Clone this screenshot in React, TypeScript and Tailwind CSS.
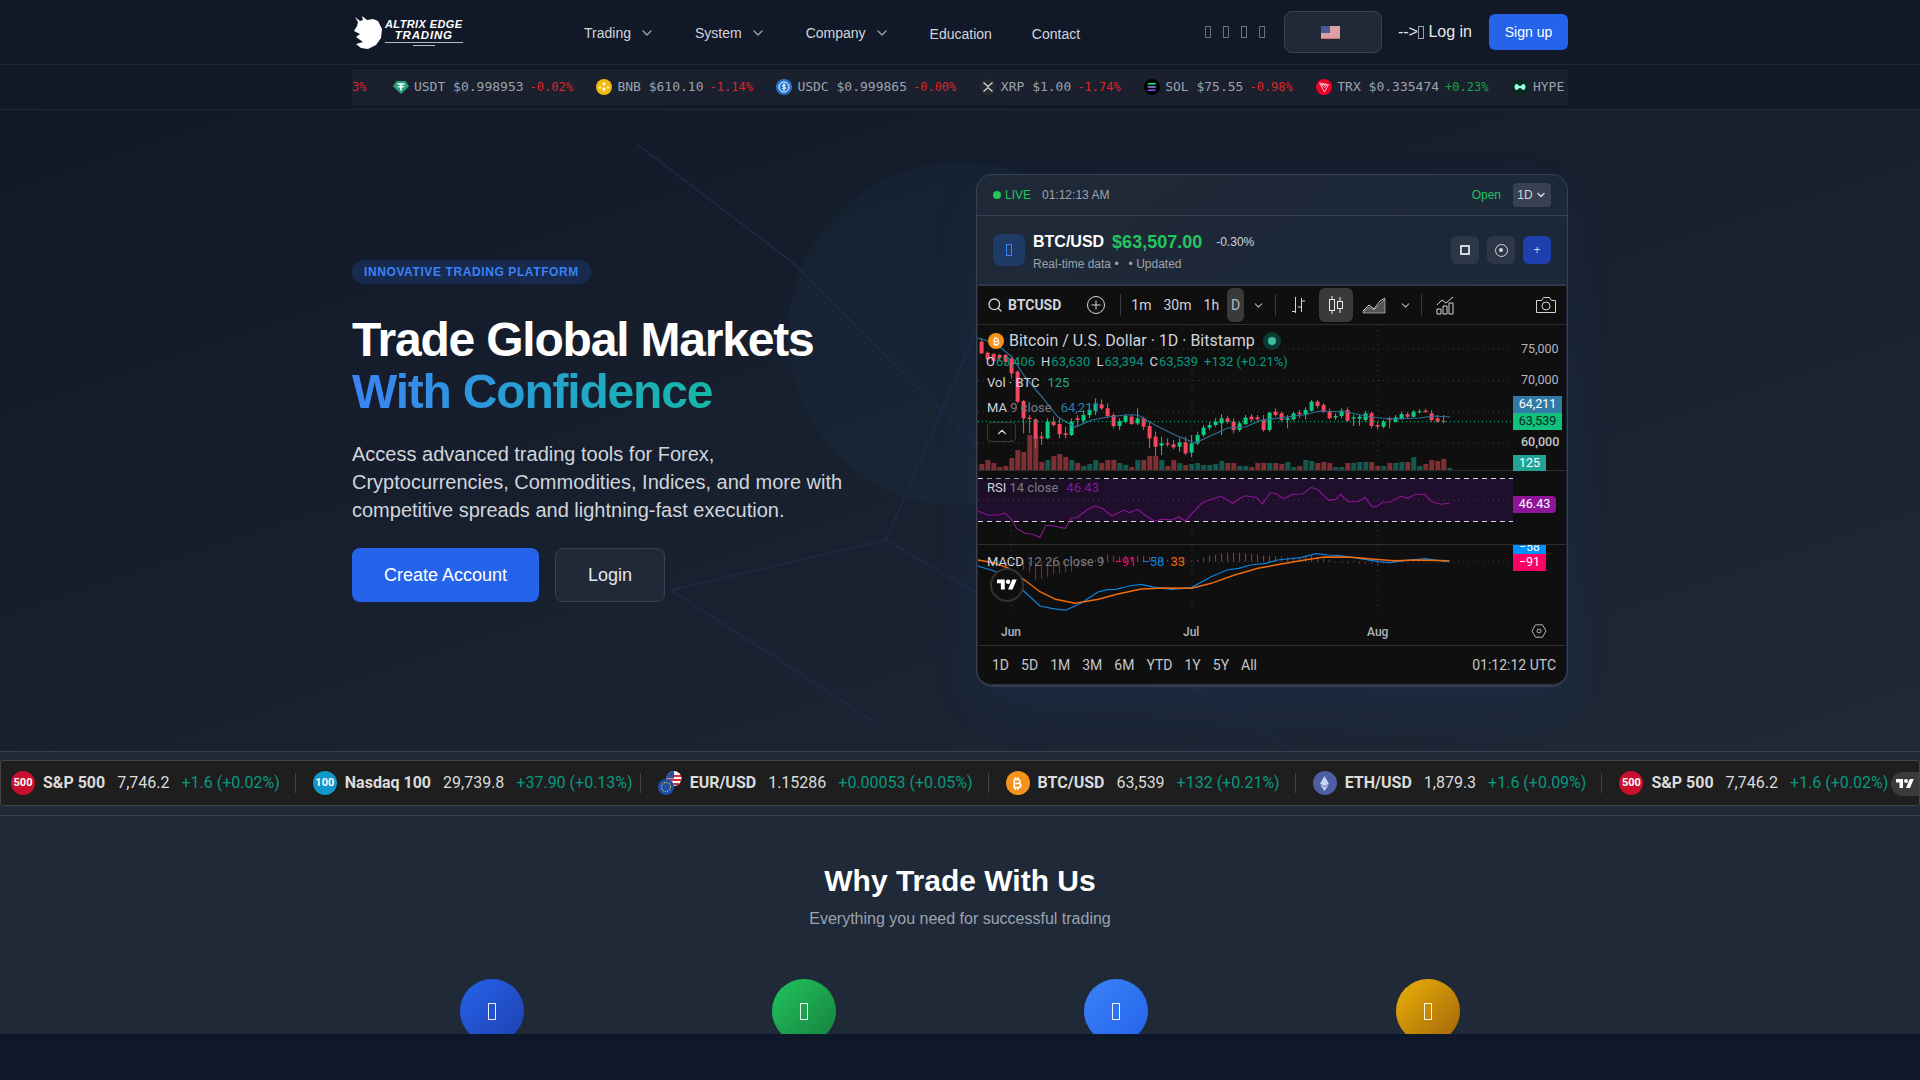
import { ChevronDown, ChevronUp, Search } from 'lucide-react'
import { FaBitcoinSign, FaEthereum } from 'react-icons/fa6'

// y values below were read off the reference, in 3x units from y=170
const cy = (v: number) => 170 + v / 3

// top, bottom, wick top, wick bottom, 1 = up
const CANDLES: number[][] = [
  [515, 550, 505, 552, 0], [548, 568, 545, 570, 0], [552, 572, 550, 575, 0], [555, 565, 552, 570, 0],
  [555, 575, 552, 585, 0], [565, 610, 560, 625, 0], [605, 695, 600, 700, 0], [693, 745, 690, 790, 0],
  [743, 747, 735, 790, 0], [748, 805, 745, 835, 0], [800, 805, 785, 825, 0], [755, 805, 745, 808, 1],
  [755, 765, 740, 770, 0], [762, 792, 745, 805, 0], [790, 795, 770, 805, 0], [755, 795, 745, 798, 1],
  [745, 750, 735, 770, 0], [735, 752, 720, 760, 1], [720, 735, 700, 745, 1], [700, 722, 685, 735, 1],
  [703, 715, 688, 720, 0], [715, 738, 700, 745, 0], [735, 768, 730, 775, 0], [753, 768, 745, 780, 1],
  [738, 755, 732, 760, 1], [740, 762, 732, 765, 0], [745, 760, 715, 765, 1], [745, 770, 740, 780, 0],
  [768, 805, 755, 835, 0], [800, 830, 785, 858, 0], [820, 827, 800, 855, 1], [820, 824, 805, 830, 0],
  [823, 832, 810, 838, 0], [817, 830, 805, 845, 1], [817, 850, 800, 855, 0], [820, 848, 795, 862, 1],
  [795, 820, 785, 825, 1], [773, 795, 765, 800, 1], [765, 773, 755, 780, 1], [755, 765, 745, 770, 1],
  [745, 760, 732, 795, 1], [745, 755, 738, 760, 0], [755, 780, 745, 790, 0], [760, 780, 755, 785, 1],
  [743, 762, 735, 765, 1], [740, 748, 732, 755, 0], [742, 748, 735, 755, 0], [750, 780, 735, 785, 0],
  [728, 780, 725, 785, 1], [725, 735, 715, 740, 0], [730, 750, 725, 755, 0], [745, 750, 735, 775, 1],
  [730, 748, 725, 752, 1], [728, 733, 720, 745, 0], [720, 735, 712, 748, 1], [695, 722, 690, 725, 1],
  [695, 708, 690, 715, 0], [705, 725, 700, 730, 0], [725, 745, 715, 748, 0], [738, 742, 730, 750, 1],
  [722, 738, 715, 745, 1], [720, 752, 712, 755, 0], [742, 746, 735, 768, 1], [740, 746, 735, 768, 1],
  [730, 750, 722, 755, 1], [730, 768, 725, 775, 0], [765, 770, 755, 778, 0], [755, 770, 750, 775, 1],
  [745, 750, 740, 775, 0], [742, 755, 735, 758, 1], [732, 747, 725, 750, 1], [733, 740, 727, 745, 0],
  [725, 740, 720, 742, 1], [724, 727, 718, 730, 1], [722, 726, 716, 728, 0], [730, 750, 720, 755, 0],
  [745, 755, 735, 758, 0], [752, 755, 735, 760, 0],
]

const VOLUME = [
  6, 10, 7, 3, 4, 12, 20, 18, 35, 33, 8, 10, 14, 16, 13, 10, 7, 4, 6, 10, 7, 10, 10, 7, 5, 3, 10, 10, 14, 14, 10, 4,
  10, 7, 5, 6, 7, 5, 5, 6, 9, 7, 7, 4, 4, 3, 7, 7, 7, 7, 6, 8, 3, 4, 10, 9, 7, 8, 7, 3, 3, 7, 7, 8, 8, 8, 4, 4, 7, 7,
  8, 8, 13, 4, 6, 10, 9, 11, 2,
]

const MACD_HIST = [
  0, 1, 1, 1, 2, 4, 6, 8, 11, 18, 17, 15, 13, 12, 11, 10, 6, 4, 2, -2, -5, -7, -6, -5, -6, -5, -6, -6, -5, -4, -3, -2,
  -2, -3, -1, -1, -2, -4, -6, -7, -8, -9, -9, -9, -8, -8, -7, -6, -6, -5, -5, -4, -4, -4, -5, -6, -5, -3, -2, 1, 1, 2,
  1, 2, 2, 2, 3, 2, 2, 1, 1, 1, 1, 1, 1, 1, 1, 1,
]

const MA_LINE =
  '978,338 995,343 1012,357 1025,377 1042,397 1058,417 1075,427 1092,420 1108,417 1125,415 1138,415 1155,425 1175,435 1195,443 1208,437 1228,428 1245,427 1262,420 1303,415 1320,411 1347,412 1370,417 1393,419 1420,418 1433,416 1450,417'

// these three are in 2.57x / 3x units from (970,440)
const RSI_LINE = [
  [20, 213], [45, 225], [70, 225], [90, 220], [105, 235], [120, 265], [140, 280], [160, 283], [180, 292], [195, 256],
  [215, 258], [245, 265], [260, 235], [275, 233], [300, 210], [320, 198], [340, 205], [365, 228], [395, 210], [410, 218],
  [430, 208], [455, 230], [475, 243], [495, 238], [520, 240], [535, 230], [553, 243], [575, 215], [595, 190], [615, 180],
  [645, 169], [675, 190], [705, 167], [735, 172], [752, 192], [770, 159], [785, 160], [805, 176], [830, 163], [855, 162],
  [877, 142], [895, 150], [922, 181], [940, 178], [952, 163], [972, 186], [1000, 184], [1015, 172], [1033, 200], [1045, 200],
  [1060, 187], [1080, 186], [1107, 169], [1125, 175], [1145, 163], [1168, 163], [1187, 185], [1210, 193], [1232, 190],
]
const MACD_BLUE = [
  [20, 378], [60, 392], [100, 410], [140, 455], [180, 498], [210, 505], [245, 511], [285, 490], [330, 455], [355, 449],
  [375, 448], [410, 438], [440, 433], [475, 442], [520, 448], [570, 442], [620, 410], [660, 390], [690, 385], [720, 375],
  [760, 370], [790, 360], [850, 353], [890, 341], [920, 345], [950, 347], [1000, 355], [1050, 365], [1080, 368], [1120, 361],
  [1170, 356], [1232, 366],
]
const MACD_ORANGE = [
  [20, 360], [60, 368], [100, 385], [140, 420], [180, 455], [220, 478], [270, 490], [330, 478], [380, 462], [440, 447],
  [500, 444], [570, 445], [620, 430], [680, 405], [740, 385], [800, 372], [860, 360], [910, 351], [980, 352], [1040, 358],
  [1090, 362], [1150, 360], [1232, 362],
]
const toPts = (l: number[][]) => l.map(([x, y]) => `${(970 + x / 2.57).toFixed(1)},${(440 + y / 3).toFixed(1)}`).join(' ')

const NAV = [
  { label: 'Trading', menu: true },
  { label: 'System', menu: true },
  { label: 'Company', menu: true },
  { label: 'Education', menu: false },
  { label: 'Contact', menu: false },
]

// the icon font never loaded in the reference: every icon shows as a thin empty box
function MissingGlyph({ className }: { className: string }) {
  return <span className={`inline-block border ${className}`} />
}

function CoinUsdt() {
  return (
    <svg viewBox="0 0 16 16" className="w-4 h-4 shrink-0">
      <path d="M3.500 2h9L16 7.500 8 15 0 7.500z" fill="#26a17b" />
      <path d="M4.500 4.200h7v1.600H8.800v1.100c1.600.1 2.800.4 2.800.8s-1.200.7-2.800.8v3H7.200v-3c-1.600-.1-2.800-.4-2.800-.8s1.200-.7 2.800-.8V5.800H4.500z" fill="#fff" />
    </svg>
  )
}
function CoinBnb() {
  return (
    <svg viewBox="0 0 16 16" className="w-4 h-4 shrink-0">
      <circle cx="8" cy="8" r="8" fill="#f0b90b" />
      <path d="M8 3l2 2-2 2-2-2zM4 7l1.500 1.500L4 10 2.500 8.500zM12 7l1.500 1.500L12 10l-1.500-1.500zM8 8l2 2-2 3-2-3z" fill="#fff3c4" />
    </svg>
  )
}
function CoinUsdc() {
  return (
    <svg viewBox="0 0 16 16" className="w-4 h-4 shrink-0">
      <circle cx="8" cy="8" r="8" fill="#2775ca" />
      <circle cx="8" cy="8" r="5" fill="none" stroke="#fff" strokeWidth="1" />
      <path d="M8 4.500v7M9.800 6.300C9.300 5.700 6.400 5.500 6.400 6.800 6.400 8.300 9.800 7.700 9.800 9.200 9.800 10.500 6.900 10.300 6.200 9.600" fill="none" stroke="#fff" strokeWidth="1" />
    </svg>
  )
}
function CoinXrp() {
  return (
    <svg viewBox="0 0 16 16" className="w-4 h-4 shrink-0">
      <circle cx="8" cy="8" r="8" fill="#23292f" />
      <path d="M3.500 3.500L8 7.500l4.500-4M3.500 12.500L8 8.500l4.500 4" fill="none" stroke="#d6d9dc" strokeWidth="1.300" />
    </svg>
  )
}
function CoinSol() {
  return (
    <svg viewBox="0 0 16 16" className="w-4 h-4 shrink-0">
      <circle cx="8" cy="8" r="8" fill="#000" />
      <path d="M4.500 4h8l-1.500 1.600H3z" fill="#14f195" />
      <path d="M3 7.200h8l1.500 1.600h-8z" fill="#80a0e0" />
      <path d="M4.500 10.400h8l-1.500 1.600H3z" fill="#9945ff" />
    </svg>
  )
}
function CoinTrx() {
  return (
    <svg viewBox="0 0 16 16" className="w-4 h-4 shrink-0">
      <circle cx="8" cy="8" r="8" fill="#ef0027" />
      <path d="M3.500 4l9 1.800L8.500 13z M5 5.200l3 3.200 2.800-2.200z" fill="none" stroke="#ffd5da" strokeWidth="0.900" />
    </svg>
  )
}
function CoinHype() {
  return (
    <svg viewBox="0 0 16 16" className="w-4 h-4 shrink-0">
      <circle cx="8" cy="8" r="8" fill="#07291f" />
      <path d="M2.500 8c0-3 2.500-4 3.700-2 .9 1.300 2.700 1.300 3.600 0 1.200-2 3.700-1 3.700 2s-2.500 4-3.700 2c-.9-1.300-2.700-1.300-3.600 0C5 12 2.500 11 2.500 8z" fill="#97fce4" />
    </svg>
  )
}

const CRYPTO = [
  { icon: <CoinUsdt />, sym: 'USDT', price: '$0.998953', chg: '-0.02%' },
  { icon: <CoinBnb />, sym: 'BNB', price: '$610.10', chg: '-1.14%' },
  { icon: <CoinUsdc />, sym: 'USDC', price: '$0.999865', chg: '-0.00%' },
  { icon: <CoinXrp />, sym: 'XRP', price: '$1.00', chg: '-1.74%' },
  { icon: <CoinSol />, sym: 'SOL', price: '$75.55', chg: '-0.98%' },
  { icon: <CoinTrx />, sym: 'TRX', price: '$0.335474', chg: '+0.23%' },
]

function TvMark({ className }: { className: string }) {
  return (
    <svg viewBox="0 0 36 28" className={className} fill="currentColor">
      <path d="M14 22H7V11H0V4h14v18zM28 22h-8l7.500-18h8L28 22z" />
      <circle cx="20" cy="8" r="4" />
    </svg>
  )
}

function EurUsdMark() {
  return (
    <svg viewBox="0 0 24 24" className="w-6 h-6 shrink-0">
      <circle cx="16" cy="7.500" r="7.500" fill="#f4f4f4" />
      <path d="M9 5h14M9.500 9h13.500M11 13h10" stroke="#d6303e" strokeWidth="2" />
      <path d="M16 0a7.500 7.500 0 0 0-7.500 7.500H16z" fill="#2b4aa0" />
      <circle cx="8" cy="16" r="8" fill="#1f4fa8" />
      <circle cx="8" cy="16" r="4.500" fill="none" stroke="#f7d117" strokeWidth="1.200" strokeDasharray="1 1.360" />
    </svg>
  )
}

const TV_ROWS = [
  { logo: <span className="w-6 h-6 rounded-full bg-[#c8102e] text-white text-[11px] font-bold flex items-center justify-center">500</span>, name: 'S&P 500', price: '7,746.2', chg: '+1.6 (+0.02%)', pad: 'w-[15px]' },
  { logo: <span className="w-6 h-6 rounded-full bg-[#0f98c9] text-white text-[11px] font-bold flex items-center justify-center">100</span>, name: 'Nasdaq 100', price: '29,739.8', chg: '+37.90 (+0.13%)', pad: 'w-[7px]' },
  { logo: <EurUsdMark />, name: 'EUR/USD', price: '1.15286', chg: '+0.00053 (+0.05%)', pad: 'w-[15px]' },
  { logo: <span className="w-6 h-6 rounded-full bg-[#f7931a] text-white text-[13px] flex items-center justify-center"><FaBitcoinSign /></span>, name: 'BTC/USD', price: '63,539', chg: '+132 (+0.21%)', pad: 'w-[15px]' },
  { logo: <span className="w-6 h-6 rounded-full bg-[#4c5fa5] text-[#c7d6f5] text-[15px] flex items-center justify-center"><FaEthereum /></span>, name: 'ETH/USD', price: '1,879.3', chg: '+1.6 (+0.09%)', pad: 'w-[15px]' },
  { logo: <span className="w-6 h-6 rounded-full bg-[#c8102e] text-white text-[11px] font-bold flex items-center justify-center">500</span>, name: 'S&P 500', price: '7,746.2', chg: '+1.6 (+0.02%)', pad: 'w-[15px]' },
]

const FEATURES = [
  'bg-gradient-to-br from-[#2563eb] to-[#1e40af]',
  'bg-gradient-to-br from-[#22c55e] to-[#15803d]',
  'bg-gradient-to-br from-[#3b82f6] to-[#2563eb]',
  'bg-gradient-to-br from-[#eab308] to-[#a16207]',
]

function ChartSvg() {
  const green = '#0ecb81'
  const red = '#f6465d'
  return (
    <svg viewBox="978 325 588 320" className="block w-[588px] h-[320px]">
      {[349, 380.500, 412, 443].map(y => (
        <line key={y} x1="978" x2="1512" y1={y} y2={y} stroke="#3a3a3a" strokeDasharray="1 4" />
      ))}
      {[1011, 1192, 1378].map(x => (
        <line key={x} x1={x} x2={x} y1="325" y2="614" stroke="#3a3a3a" strokeDasharray="1 4" />
      ))}
      {VOLUME.map((h, i) => {
        const up = CANDLES[i] ? CANDLES[i][4] === 1 : true
        return <rect key={i} x={979.300 + i * 6} y={470 - h} width="5" height={h} fill={up ? '#125a50' : '#7d2f33'} />
      })}
      {CANDLES.map((c, i) => {
        const x = 981.600 + i * 6
        const color = c[4] ? green : red
        return (
          <g key={i}>
            <line x1={x} x2={x} y1={cy(c[2])} y2={cy(c[3])} stroke={color} strokeWidth="1" />
            <rect x={x - 2} y={cy(c[0])} width="4" height={Math.max(1, (c[1] - c[0]) / 3)} fill={color} />
          </g>
        )
      })}
      <polyline points={MA_LINE} fill="none" stroke="#2f6f99" strokeWidth="1.200" />
      <line x1="978" x2="1513" y1="421.700" y2="421.700" stroke="#0ecb81" strokeDasharray="1 3" />

      <line x1="978" x2="1566" y1="470.500" y2="470.500" stroke="#2e2e2e" />
      <rect x="978" y="478.500" width="535" height="43" fill="#1f0f2d" />
      <line x1="978" x2="1513" y1="478.500" y2="478.500" stroke="#d8d2dc" strokeDasharray="5 4" />
      <line x1="978" x2="1513" y1="521.500" y2="521.500" stroke="#d8d2dc" strokeDasharray="5 4" />
      <line x1="978" x2="1513" y1="500" y2="500" stroke="#4a3a55" strokeDasharray="1 4" />
      <polyline points={toPts(RSI_LINE)} fill="none" stroke="#8e1599" strokeWidth="1.100" />

      <line x1="978" x2="1566" y1="544.500" y2="544.500" stroke="#2e2e2e" />
      <line x1="978" x2="1513" y1="561.700" y2="561.700" stroke="#3a3a3a" strokeDasharray="1 4" />
      {MACD_HIST.map((h, i) => (
        <line key={i} x1={981.600 + i * 6} x2={981.600 + i * 6} y1="561.700" y2={561.700 + h} stroke={h > 0 ? '#a8174f' : '#ff0066'} />
      ))}
      <polyline points={toPts(MACD_BLUE)} fill="none" stroke="#0a84e0" strokeWidth="1.200" />
      <polyline points={toPts(MACD_ORANGE)} fill="none" stroke="#f26c0d" strokeWidth="1.400" />
    </svg>
  )
}

function Widget() {
  return (
    <div className="mx-px rounded-b-[14px] overflow-hidden bg-[#0f0f0f] border-t-2 border-b-2 border-[#30394a] font-['Roboto',sans-serif] text-[#d1d4dc]">
      {/* toolbar */}
      <div className="h-[39px] border-b border-[#2e2e2e] flex items-center text-[14px] text-[#d1d4dc]">
        <Search size={16} className="ml-[9px] text-[#d1d4dc]" strokeWidth={2} />
        <span className="ml-[5px] font-bold text-[14px]">BTCUSD</span>
        <svg viewBox="0 0 20 20" className="ml-[25px] w-5 h-5" fill="none" stroke="#d1d4dc">
          <circle cx="10" cy="10" r="8.500" />
          <path d="M10 5.500v9M5.500 10h9" />
        </svg>
        <span className="ml-[14px] w-px h-[22px] bg-[#3a3a3a]" />
        <span className="ml-[10px]">1m</span>
        <span className="ml-[12px]">30m</span>
        <span className="ml-[12px]">1h</span>
        <span className="ml-[8px] w-[17px] h-[34px] rounded-md bg-[#3a3a3a] text-[#b2b5be] flex items-center justify-center">D</span>
        <ChevronDown size={13} className="ml-[8px] text-[#b2b5be]" />
        <span className="ml-[10px] w-px h-[22px] bg-[#3a3a3a]" />
        <svg viewBox="0 0 18 18" className="ml-[13px] w-[18px] h-[18px]" fill="none" stroke="#d1d4dc">
          <path d="M6.500 1v16M6.500 15.500H3M12.500 2v14M12.500 5h3.500M12.500 11H9" />
        </svg>
        <span className="ml-[12px] w-[34px] h-[34px] rounded-md bg-[#3a3a3a] flex items-center justify-center">
          <svg viewBox="0 0 18 20" className="w-[18px] h-5" fill="none" stroke="#e8e8e8">
            <path d="M5 1v3M5 16v3M13 2v4M13 14v4" />
            <rect x="2.500" y="4.500" width="5" height="11" />
            <rect x="10.500" y="6.500" width="5" height="7" />
          </svg>
        </span>
        <svg viewBox="0 0 24 18" className="ml-[9px] w-[24px] h-[18px]" fill="none" stroke="#d1d4dc">
          <path d="M1 15l6-6 5 4 6-8 5-3" />
          <path d="M1 17h22V3l-5 5-6 6-5-3-6 5z" fill="#d1d4dc" fillOpacity="0.350" strokeWidth="0.600" />
        </svg>
        <ChevronDown size={13} className="ml-[13px] text-[#b2b5be]" />
        <span className="ml-[9px] w-px h-[22px] bg-[#3a3a3a]" />
        <svg viewBox="0 0 20 20" className="ml-[13px] w-5 h-5" fill="none" stroke="#d1d4dc">
          <path d="M2 10l5-5 4 3 7-6" />
          <path d="M2 14h4v5H2zM8 11h4v8H8zM14 8h4v11h-4z" />
        </svg>
        <svg viewBox="0 0 22 20" className="ml-auto mr-[9px] w-[22px] h-5" fill="none" stroke="#d1d4dc">
          <path d="M1.500 5.500h5l2-3h6l2 3h4v12h-19z" />
          <circle cx="11" cy="11" r="4" />
        </svg>
      </div>

      {/* chart panes, labels sit over the drawing */}
      <div className="relative h-[321px] border-b border-[#2e2e2e] text-[13px]">
        <ChartSvg />

        <div className="absolute left-[10px] top-[6px] flex items-center">
          <span className="w-4 h-4 rounded-full bg-[#f7931a] text-white text-[9px] flex items-center justify-center"><FaBitcoinSign /></span>
          <span className="ml-[5px] text-[16px] leading-[20px] text-[#d1d4dc]">Bitcoin / U.S. Dollar · 1D · Bitstamp</span>
          <span className="ml-[8px] w-[18px] h-[18px] rounded-full bg-[#0b3a33] flex items-center justify-center">
            <span className="w-2 h-2 rounded-full bg-[#3dbf9f]" />
          </span>
        </div>
        <div className="absolute left-[8px] top-[27px] flex text-[#089981] text-[13px]">
          <span className="text-[#d1d4dc] mr-px">O</span>63,406
          <span className="ml-[6px] text-[#d1d4dc] mr-px">H</span>63,630
          <span className="ml-[6px] text-[#d1d4dc] mr-px">L</span>63,394
          <span className="ml-[6px] text-[#d1d4dc] mr-px">C</span>63,539
          <span className="ml-[6px]">+132 (+0.21%)</span>
        </div>
        <div className="absolute left-[9px] top-[48px] text-[#d1d4dc]">
          Vol · BTC<span className="ml-[8px] text-[#22ab94]">125</span>
        </div>
        <div className="absolute left-[9px] top-[73px] text-[#d1d4dc]">
          MA <span className="text-[#787b86]">9 close</span><span className="ml-[9px] text-[#2f7ba8]">64,211</span>
        </div>
        <span className="absolute left-[9px] top-[97px] w-[29px] h-[20px] rounded border border-[#3a3a3a] flex items-center justify-center">
          <ChevronUp size={14} className="text-[#d1d4dc]" />
        </span>
        <div className="absolute left-[4px] top-[153px] pl-[5px] pr-[4px] bg-[#0f0f0f]/30 text-[#d1d4dc]">
          RSI <span className="text-[#787b86]">14 close</span><span className="ml-[8px] text-[#8e1599]">46.43</span>
        </div>
        <div className="absolute left-[9px] top-[227px] text-[#d1d4dc]">
          MACD <span className="text-[#787b86]">12 26 close 9</span>
          <span className="ml-[10px] text-[#ff0066]">−91</span>
          <span className="ml-[6px] text-[#0a84e0]">−58</span>
          <span className="ml-[6px] text-[#f26c0d]">33</span>
        </div>
        <span className="absolute left-[12px] top-[243px] w-[34px] h-[34px] rounded-full border-2 border-[#333] bg-[#0f0f0f] text-white flex items-center justify-center">
          <TvMark className="w-[20px] h-[16px]" />
        </span>

        {/* price axis */}
        <span className="absolute left-[543px] top-[15px] text-[12.500px] text-[#b2b5be]">75,000</span>
        <span className="absolute left-[543px] top-[46px] text-[12.500px] text-[#b2b5be]">70,000</span>
        <span className="absolute left-[535px] top-[71px] w-[49px] h-[17px] bg-[#3179a6] text-white text-[12.500px] flex items-center justify-center">64,211</span>
        <span className="absolute left-[535px] top-[88px] w-[49px] h-[17px] bg-[#10c07c] text-[#06281b] text-[12.500px] flex items-center justify-center">63,539</span>
        <span className="absolute left-[543px] top-[108px] text-[12.500px] font-medium text-[#c4c6cc]">60,000</span>
        <span className="absolute left-[535px] top-[130px] w-[33px] h-[16px] bg-[#22a394] text-white text-[12.500px] flex items-center justify-center">125</span>
        <span className="absolute left-[535px] top-[171px] w-[43px] h-[17px] rounded-r bg-[#8e1599] text-white text-[12.500px] flex items-center justify-center">46.43</span>
        <span className="absolute left-[535px] top-[220px] w-[33px] h-[9px] bg-[#0091ff] overflow-hidden text-white text-[12px] leading-[5px] text-center">−58</span>
        <span className="absolute left-[535px] top-[229px] w-[33px] h-[17px] bg-[#ff0066] text-white text-[12.500px] flex items-center justify-center">−91</span>

        {/* time axis */}
        <span className="absolute left-[23px] top-[298px] text-[12px] font-medium text-[#b2b5be]">Jun</span>
        <span className="absolute left-[205px] top-[298px] text-[12px] font-medium text-[#b2b5be]">Jul</span>
        <span className="absolute left-[389px] top-[298px] text-[12px] font-medium text-[#b2b5be]">Aug</span>
        <svg viewBox="0 0 16 16" className="absolute left-[553px] top-[298px] w-4 h-4" fill="none" stroke="#b2b5be">
          <path d="M4.500 1.800h7L15 8l-3.500 6.200h-7L1 8z" />
          <circle cx="8" cy="8" r="2" />
        </svg>
      </div>

      {/* range bar */}
      <div className="h-[38px] flex items-center pl-[14px] pr-[10px] text-[14px] text-[#c4c6cc]">
        <span>1D</span>
        <span className="ml-3">5D</span>
        <span className="ml-3">1M</span>
        <span className="ml-3">3M</span>
        <span className="ml-3">6M</span>
        <span className="ml-3">YTD</span>
        <span className="ml-3">1Y</span>
        <span className="ml-3">5Y</span>
        <span className="ml-3">All</span>
        <span className="ml-auto">01:12:12 UTC</span>
      </div>
    </div>
  )
}

export default function App() {
  return (
    <div className="h-[1080px] overflow-hidden bg-[#0f172a] font-['Liberation_Sans',sans-serif] flex flex-col">
      {/* Nav */}
      <header className="h-[65px] shrink-0 bg-[#111827] border-b border-[#1f2937]">
        <div className="w-[1216px] mx-auto h-full flex items-center">
          <div className="w-[112px] h-[36px] flex items-center text-white">
            <svg viewBox="0 0 32 36" className="w-[32px] h-[36px] shrink-0" fill="#fff">
              <path d="M3 3l5 4 3-1-1-4 5 4 6-1 5 2 4 8-1 9-5 7-8 4-7-1-5-4 7-2-7-5 4-3-6-3 3-5 1-4z" />
            </svg>
            <div className="ml-[1px] italic font-bold leading-[11px] text-center relative">
              <div className="text-[11px] tracking-[0.4px] whitespace-nowrap">ALTRIX EDGE</div>
              <div className="text-[11.500px] tracking-[0.8px]">TRADING</div>
              <div className="mt-[1px] h-px bg-[#b8bcc2]" />
              <div className="mt-[2px] mx-auto w-[22px] h-px bg-[#b8bcc2]" />
            </div>
          </div>
          <nav className="ml-[120px] mt-[2px] flex gap-10 text-sm text-[#d1d5db]">
            {NAV.map(n => (
              <span key={n.label} className={n.menu ? 'flex items-center' : 'flex items-center mt-[2px]'}>
                {n.label}
                {n.menu && <ChevronDown size={16} className="ml-2 text-[#9ca3af]" />}
              </span>
            ))}
          </nav>
          <div className="ml-auto flex items-center">
            <div className="flex gap-3">
              <MissingGlyph className="w-[6px] h-[12px] border-[#6b7280]" />
              <MissingGlyph className="w-[6px] h-[12px] border-[#6b7280]" />
              <MissingGlyph className="w-[6px] h-[12px] border-[#6b7280]" />
              <MissingGlyph className="w-[6px] h-[12px] border-[#6b7280]" />
            </div>
            <div className="ml-[19px] w-[98px] h-[42px] rounded-lg border border-[#374151] bg-[#1f2937] flex items-center justify-center">
              <svg viewBox="0 0 19 13" className="w-[19px] h-[13px] -ml-[4px]">
                <rect width="19" height="13" fill="#eee" />
                <path d="M0 1h19M0 3h19M0 5h19M0 7h19M0 9h19M0 11h19M0 12.700h19" stroke="#c9505a" strokeWidth="1" />
                <rect width="9" height="7" fill="#4a5a92" />
              </svg>
            </div>
            <span className="ml-4 text-[#e5e7eb] whitespace-pre flex items-center">
              {'-->'}
              <MissingGlyph className="w-[6px] h-[13px] border-[#9ca3af]" />
              {' Log in'}
            </span>
            <span className="ml-[17px] h-9 w-[79px] rounded-md bg-[#2563eb] text-white text-sm flex items-center justify-center">Sign up</span>
          </div>
        </div>
      </header>

      {/* Crypto strip */}
      <div className="h-[45px] shrink-0 bg-[#111827] border-b border-[#1f2937] pt-1">
        <div className="w-[1216px] h-9 mx-auto bg-[#1a202e] overflow-hidden flex items-center gap-[23.500px] whitespace-nowrap font-['DejaVu_Sans_Mono',monospace] text-[13px]">
          <span className="text-xs text-[#dc2626] mr-[3px]">3%</span>
          {CRYPTO.map(c => (
            <span key={c.sym} className="flex items-center">
              {c.icon}
              <span className="ml-[5px] text-[#9ca3af]">{c.sym} {c.price}</span>
              <span className={c.chg[0] === '+' ? 'ml-[6px] text-xs text-[#16a34a]' : 'ml-[6px] text-xs text-[#dc2626]'}>{c.chg}</span>
            </span>
          ))}
          <span className="flex items-center">
            <CoinHype />
            <span className="ml-[5px] text-[#9ca3af]">HYPE</span>
          </span>
        </div>
      </div>

      {/* Hero */}
      <section className="relative h-[641px] shrink-0 overflow-hidden bg-gradient-to-br from-[#111827] to-[#1f2937]">
        <div className="absolute left-[788px] top-[52px] w-[344px] h-[344px] rounded-full bg-[#14b8a6]/[0.04]" />
        <svg viewBox="0 110 1920 641" className="absolute inset-0 w-full h-full" fill="none" stroke="#202c4a" strokeWidth="1.300">
          <polyline points="638,145 792,262 977,446" />
          <polyline points="976,331 886,540 671,590 876,723" />
          <polyline points="886,540 977,593" />
          <polyline points="1189,687 1223,701 1294,752" />
        </svg>
        <div className="relative w-[1216px] h-full mx-auto flex">
          <div className="w-[624px] pt-[149px]">
            <span className="inline-block h-6 px-3 rounded-full bg-[#172a4f] text-[#3b82f6] text-xs font-bold leading-6 tracking-[0.6px]">
              INNOVATIVE TRADING PLATFORM
            </span>
            <h1 className="mt-[30px] text-[48px] leading-[52px] font-bold tracking-[-1.200px] text-white">
              Trade Global Markets
              <br />
              <span className="bg-gradient-to-r from-[#3b82f6] to-[#14b8a6] bg-clip-text text-transparent">With Confidence</span>
            </h1>
            <p className="mt-[22px] max-w-lg text-xl leading-7 text-[#d1d5db]">
              Access advanced trading tools for Forex, Cryptocurrencies, Commodities, Indices, and more with competitive spreads and lightning-fast execution.
            </p>
            <div className="mt-6 flex gap-4">
              <span className="w-[187px] h-[54px] rounded-lg bg-[#2563eb] text-white text-lg flex items-center justify-center">Create Account</span>
              <span className="w-[110px] h-[54px] rounded-lg bg-[#1f2937] border border-[#374151] text-[#e5e7eb] text-lg flex items-center justify-center">Login</span>
            </div>
          </div>

          {/* Chart card */}
          <div className="w-[592px] h-[513px] mt-[64px] rounded-2xl border border-[#374151] bg-gradient-to-br from-[#1f2937] to-[#1a2639] shadow-[0_20px_50px_rgba(37,99,235,0.08)] overflow-hidden">
            <div className="h-[41px] border-b border-[#374151] flex items-center pl-4 pr-4 text-xs">
              <span className="w-2 h-2 rounded-full bg-[#22c55e]" />
              <span className="ml-1 text-[#22c55e]">LIVE</span>
              <span className="ml-[11px] text-[#9ca3af]">01:12:13 AM</span>
              <span className="ml-auto text-[#22c55e]">Open</span>
              <span className="ml-3 w-[38px] h-6 rounded bg-[#374151] text-[#d1d5db] flex items-center justify-center">
                1D<ChevronDown size={12} className="ml-[2px]" strokeWidth={3} />
              </span>
            </div>
            <div className="h-[68px] flex items-center pl-4 pr-4">
              <span className="w-8 h-8 rounded-lg bg-[#1e3a66] flex items-center justify-center">
                <MissingGlyph className="w-[6px] h-[12px] border-[#3b82f6]" />
              </span>
              <div className="ml-2">
                <div className="flex items-center">
                  <span className="text-base font-bold text-white">BTC/USD</span>
                  <span className="ml-2 text-lg font-bold text-[#22c55e]">$63,507.00</span>
                  <span className="ml-[14px] text-xs text-[#d1d5db]">-0.30%</span>
                </div>
                <div className="text-xs text-[#9ca3af] whitespace-pre">Real-time data {'\u2022'}   {'\u2022'} Updated</div>
              </div>
              <div className="ml-auto flex gap-2">
                <span className="w-7 h-7 rounded-md bg-[#374151]/60 flex items-center justify-center">
                  <span className="w-[10px] h-[10px] border-2 border-[#d1d5db]" />
                </span>
                <span className="w-7 h-7 rounded-md bg-[#374151]/60 flex items-center justify-center">
                  <span className="w-[13px] h-[13px] rounded-full border border-[#d1d5db] flex items-center justify-center">
                    <span className="w-[4px] h-[4px] rounded-full bg-[#d1d5db]" />
                  </span>
                </span>
                <span className="w-7 h-7 rounded-md bg-[#1e40af] text-[#d1d5db] text-xs flex items-center justify-center">+</span>
              </div>
            </div>
            <Widget />
          </div>
        </div>
      </section>

      {/* TV ticker band */}
      <div className="h-[65px] shrink-0 bg-[#1f2937] border-y border-[#374151] pt-2">
        <div className="h-[46px] rounded-[3px] border border-[#434343] bg-[#1e1e1e] relative overflow-hidden flex items-center whitespace-nowrap font-['Roboto',sans-serif] text-base">
          {TV_ROWS.map((r, i) => (
            <div key={i} className="flex items-center">
              {i > 0 && <span className="w-px h-5 bg-[#434343] mr-4" />}
              <span className={i === 0 ? 'ml-[10px]' : 'ml-px'}>{r.logo}</span>
              <span className="ml-2 font-bold text-[#dbdbdb]">{r.name}</span>
              <span className="ml-3 text-[#dbdbdb]">{r.price}</span>
              <span className="ml-3 text-[#089981]">{r.chg}</span>
              <span className={r.pad} />
            </div>
          ))}
          <span className="absolute right-0 top-[11px] w-[28px] h-[24px] rounded-l-full bg-[#3a3a3a] text-white flex items-center justify-center">
            <TvMark className="w-[18px] h-[14px]" />
          </span>
        </div>
      </div>

      {/* Why trade */}
      <section className="h-[218px] shrink-0 overflow-hidden bg-[#1f2937] pt-[47px] text-center">
        <h2 className="text-[30px] leading-9 font-bold text-white">Why Trade With Us</h2>
        <p className="mt-2 text-base text-[#9ca3af]">Everything you need for successful trading</p>
        <div className="mt-[48px] w-[1216px] mx-auto grid grid-cols-4 gap-8">
          {FEATURES.map((f, i) => (
            <div key={i} className="flex justify-center">
              <span className={`w-16 h-16 rounded-full ${f} flex items-center justify-center`}>
                <MissingGlyph className="w-[8px] h-[17px] border-white/90" />
              </span>
            </div>
          ))}
        </div>
      </section>
    </div>
  )
}
